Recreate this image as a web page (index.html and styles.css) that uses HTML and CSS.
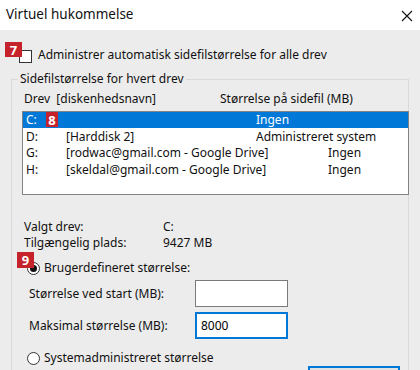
FILE: index.html
```html
<!DOCTYPE html>
<html lang="da">
<head>
  <meta charset="UTF-8" />
  <title>Virtuel hukommelse</title>
  <link rel="stylesheet" href="styles.css">
</head>
<body>
  <div class="window">
    <div class="titlebar">
      <span class="title">Virtuel hukommelse</span>
      <svg class="close" width="12" height="12" viewBox="0 0 12 12">
        <path d="M1 1 L11 11 M11 1 L1 11" stroke="#111" stroke-width="1.1" fill="none"/>
      </svg>
    </div>

    <div class="content">
      <div class="auto-row">
        <span class="badge badge-7">7</span>
        <span class="checkbox"></span>
        <span>Administrer automatisk sidefilstørrelse for alle drev</span>
      </div>

      <fieldset class="group">
        <legend>Sidefilstørrelse for hvert drev</legend>

        <div class="list-head">
          <span>Drev&nbsp; [diskenhedsnavn]</span>
          <span>Størrelse på sidefil (MB)</span>
        </div>

        <div class="listbox">
          <div class="row selected">
            <span>C:</span><span></span><span>Ingen</span>
            <span class="badge badge-8">8</span>
          </div>
          <div class="row">
            <span>D:</span><span>[Harddisk 2]</span><span>Administreret system</span>
          </div>
          <div class="row wide">
            <span>G:</span><span>[rodwac@gmail.com - Google Drive]</span><span>Ingen</span>
          </div>
          <div class="row wide">
            <span>H:</span><span>[skeldal@gmail.com - Google Drive]</span><span>Ingen</span>
          </div>
        </div>

        <div class="info">
          <span>Valgt drev:</span><span>C:</span>
          <span>Tilgængelig plads:</span><span>9427 MB</span>
        </div>

        <div class="radio-row custom">
          <span class="badge badge-9">9</span>
          <span class="radio checked"></span>
          <span>Brugerdefineret størrelse:</span>
        </div>

        <div class="field">
          <label for="start">Størrelse ved start (MB):</label>
          <input type="text" id="start" value="">
        </div>
        <div class="field">
          <label for="max">Maksimal størrelse (MB):</label>
          <input type="text" id="max" class="focused" value="8000">
        </div>

        <div class="radio-row">
          <span class="radio"></span>
          <span>Systemadministreret størrelse</span>
        </div>

        <div class="buttons">
          <button type="button" aria-label="Angiv"></button>
        </div>
      </fieldset>
    </div>
  </div>
</body>
</html>
```

FILE: styles.css
```css
html, body {
  margin: 0;
  height: 370px;
  overflow: hidden;
}
body {
  font-family: 'Noto Sans', 'Open Sans', sans-serif;
  font-size: 12px;
  color: #111;
  background: #ececec;
}
.window {
  width: 420px;
  height: 370px;
  display: flex;
  flex-direction: column;
  overflow: hidden;
}
.titlebar {
  flex-shrink: 0;
  height: 30px;
  background: #fff;
  display: flex;
  align-items: center;
  justify-content: space-between;
  padding: 0 7px 2px 6px;
  box-sizing: border-box;
}
.title {
  font-size: 13.5px;
}
.close {
  margin-top: 4px;
}
.content {
  flex: 1;
  padding-top: 17px;
}
.auto-row {
  position: relative;
  display: flex;
  align-items: center;
  height: 16px;
  line-height: 16px;
  padding-left: 19px;
}
.checkbox {
  width: 11px;
  height: 11px;
  border: 1px solid #333;
  background: #fff;
  margin: 3px 6px 0 0;
}
.badge {
  position: absolute;
  background: #c5222b;
  color: #fff;
  font-weight: 700;
  font-size: 13px;
  display: flex;
  align-items: center;
  justify-content: center;
}
.badge-7 {
  left: 5px;
  top: -5px;
  width: 17px;
  height: 15px;
}
.badge-8 {
  left: 23px;
  top: 0;
  width: 12px;
  height: 15px;
}
.badge-9 {
  left: -10px;
  top: -8px;
  width: 17px;
  height: 16px;
}
.group {
  margin: 8px 11px 0 11px;
  border: 1px solid #d9d9d9;
  padding: 0 0 0 10px;
}
.group legend {
  margin-left: -4px;
  padding: 0 2px;
  line-height: 16px;
}
.list-head {
  display: grid;
  grid-template-columns: 196px auto;
  line-height: 16px;
  padding: 4px 0 0 2px;
  margin-bottom: 4px;
}
.listbox {
  height: 82px;
  border: 1px solid #838383;
  background: #fff;
  margin-right: -1px;
}
.row {
  position: relative;
  display: grid;
  grid-template-columns: 40px 190px auto;
  height: 16px;
  line-height: 16px;
  padding-left: 3px;
  white-space: nowrap;
}
.row + .row {
  margin-top: 0.5px;
}
.row.wide {
  grid-template-columns: 40px 262px auto;
}
.row.selected {
  background: #0078d7;
  color: #fff;
}
.info {
  display: grid;
  grid-template-columns: 139px auto;
  line-height: 16px;
  padding: 24px 0 0 2px;
}
.radio-row {
  position: relative;
  display: flex;
  align-items: center;
  height: 16px;
  line-height: 16px;
  margin-left: 5px;
}
.radio-row.custom {
  margin-top: 9px;
}
.radio {
  width: 11px;
  height: 11px;
  border: 1px solid #333;
  border-radius: 50%;
  background: #fff;
  margin-right: 4px;
  display: flex;
  align-items: center;
  justify-content: center;
}
.radio.checked::after {
  content: "";
  width: 7px;
  height: 7px;
  border-radius: 50%;
  background: #111;
}
.field {
  display: grid;
  grid-template-columns: 166px 93px;
  align-items: center;
  margin: 4px 0 0 7px;
}
.field + .field {
  margin-top: 5px;
}
.field input {
  height: 27px;
  box-sizing: border-box;
  border: 1px solid #7a7a7a;
  background: #fff;
  font: inherit;
  padding: 0 5px;
  outline: none;
}
.field input.focused {
  border: 1px solid #0078d7;
  box-shadow: inset 0 0 0 1px #0078d7;
}
.field + .radio-row {
  margin-top: 11px;
}
.buttons {
  display: flex;
  justify-content: flex-end;
  padding-right: 8px;
}
.buttons button {
  width: 92px;
  height: 23px;
  border: 2px solid #0078d7;
  background: #e1e1e1;
  font: inherit;
}
```
